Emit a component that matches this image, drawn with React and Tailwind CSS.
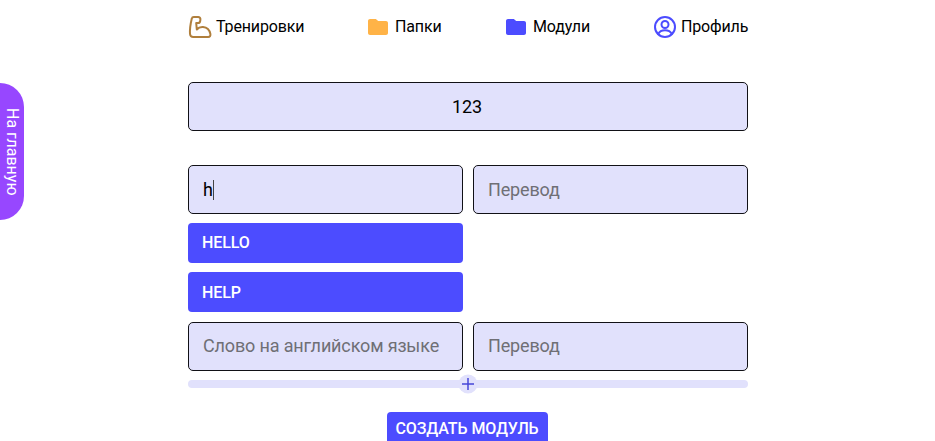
import React from "react";

function Muscle() {
  return (
    <svg width="24" height="24" viewBox="0 0 24 24" fill="none" stroke="#B07F3C" strokeWidth="2" strokeLinecap="round" strokeLinejoin="round">
      <path d="M3.8 3.6 C4 2.6 4.8 2 5.8 2 H10.2 C11.6 2 12.6 3.2 12.4 4.5 L12.2 6 C12 7.3 10.9 8.2 9.6 8.1 L8.2 8 L8.8 14.5 C10.2 12.8 12.6 11.8 15 12 C18.6 12.3 21.6 15 22.4 19 C22.7 20.6 21.9 22 20.2 22 H5.2 C3.4 22 2.2 20.8 2 19 C1.7 14.5 2.6 8.5 3.8 3.6 Z" />
    </svg>
  );
}

function Folder({ color }) {
  return (
    <svg width="20" height="16" viewBox="0 0 20 16" fill={color}>
      <path d="M2 0 H7.4 C7.8 0 8.1 0.2 8.4 0.4 L10.2 2 H18 C19.1 2 20 2.9 20 4 V14 C20 15.1 19.1 16 18 16 H2 C0.9 16 0 15.1 0 14 V2 C0 0.9 0.9 0 2 0 Z" />
    </svg>
  );
}

function Profile() {
  return (
    <svg width="24" height="24" viewBox="0 0 24 24" fill="none" stroke="#4C4CFF" strokeWidth="2" strokeLinecap="round">
      <circle cx="12" cy="12" r="10" />
      <circle cx="12" cy="9.5" r="3.5" />
      <path d="M5.2 19 C6.5 16.3 9 15.2 12 15.2 C15 15.2 17.5 16.3 18.8 19" />
    </svg>
  );
}

function NavItem({ icon, label, className }) {
  return (
    <div className={"flex items-center shrink-0 " + className}>
      {icon}
      <span className="text-[16px] leading-[20px] text-black tracking-[-0.15px]">{label}</span>
    </div>
  );
}

function Field({ placeholder, value, caret, className = "" }) {
  return (
    <div className={"h-[49px] flex-1 min-w-0 flex items-center px-[14px] rounded-[5px] border border-[#111116] bg-[#E1E1FC] text-[18px] tracking-[-0.15px] " + className}>
      {value ? (
        <span className="text-black flex items-center">
          {value}
          {caret && <span className="inline-block w-px h-[20px] bg-[#444]" />}
        </span>
      ) : (
        <span className="text-[#6f6f75] whitespace-nowrap">{placeholder}</span>
      )}
    </div>
  );
}

function Suggestion({ children, className = "" }) {
  return (
    <div className={"w-[275px] h-[40px] flex items-center px-[14px] rounded-[4px] bg-[#4C4CFF] text-white text-[16px] font-medium tracking-[-0.1px] " + className}>
      {children}
    </div>
  );
}

export default function App() {
  return (
    <div className="relative h-[441px] overflow-hidden bg-white font-['Roboto',sans-serif]">
      <div className="absolute left-0 top-[83px] w-[24px] h-[137px] rounded-r-[24px] bg-[#9747FF] flex items-center justify-center">
        <span className="text-white text-[16px] leading-[20px] [writing-mode:vertical-rl] whitespace-nowrap">На главную</span>
      </div>

      <div className="w-[560px] ml-[188px] pt-px">
        <div className="h-[52px] flex items-center">
          <NavItem className="gap-[4px] w-[180px]" icon={<Muscle />} label="Тренировки" />
          <NavItem className="gap-[7px] w-[138px]" icon={<Folder color="#FFB347" />} label="Папки" />
          <NavItem className="gap-[7px] w-[147px]" icon={<Folder color="#4C4CFF" />} label="Модули" />
          <NavItem className="gap-[4px]" icon={<Profile />} label="Профиль" />
        </div>

        <div className="mt-[29px] h-[49px] flex items-center justify-center pr-[2px] rounded-[5px] border border-[#111116] bg-[#E1E1FC] text-[18px] tracking-[-0.15px] text-black">
          123
        </div>

        <div className="mt-[34px] flex flex-col gap-[9px]">
          <div className="flex gap-[10px]">
            <Field value="h" caret />
            <Field placeholder="Перевод" />
          </div>
          <Suggestion>HELLO</Suggestion>
          <Suggestion className="pt-[2px]">HELP</Suggestion>
          <div className="flex gap-[10px] mt-px">
            <Field className="pb-[2px]" placeholder="Слово на английском языке" />
            <Field className="pb-[2px]" placeholder="Перевод" />
          </div>
          <div className="relative h-[8px] rounded-full bg-[#E1E1FC]">
            <div className="absolute left-1/2 top-1/2 -translate-x-1/2 -translate-y-1/2 w-[19px] h-[19px] rounded-full bg-[#E1E1FC] flex items-center justify-center">
              <svg width="13" height="13" viewBox="0 0 13 13" stroke="#4646D8" strokeWidth="1.5" fill="none">
                <path d="M6.5 0.5 V12.5 M0.5 6.5 H12.5" />
              </svg>
            </div>
          </div>
        </div>

        <div className="mt-[24px] flex justify-center pr-[2px]">
          <div className="w-[161px] h-[40px] pb-[6px] rounded-[4px] bg-[#4C4CFF] text-white text-[16px] font-medium tracking-[-0.1px] flex items-center justify-center">
            СОЗДАТЬ МОДУЛЬ
          </div>
        </div>
      </div>
    </div>
  );
}
